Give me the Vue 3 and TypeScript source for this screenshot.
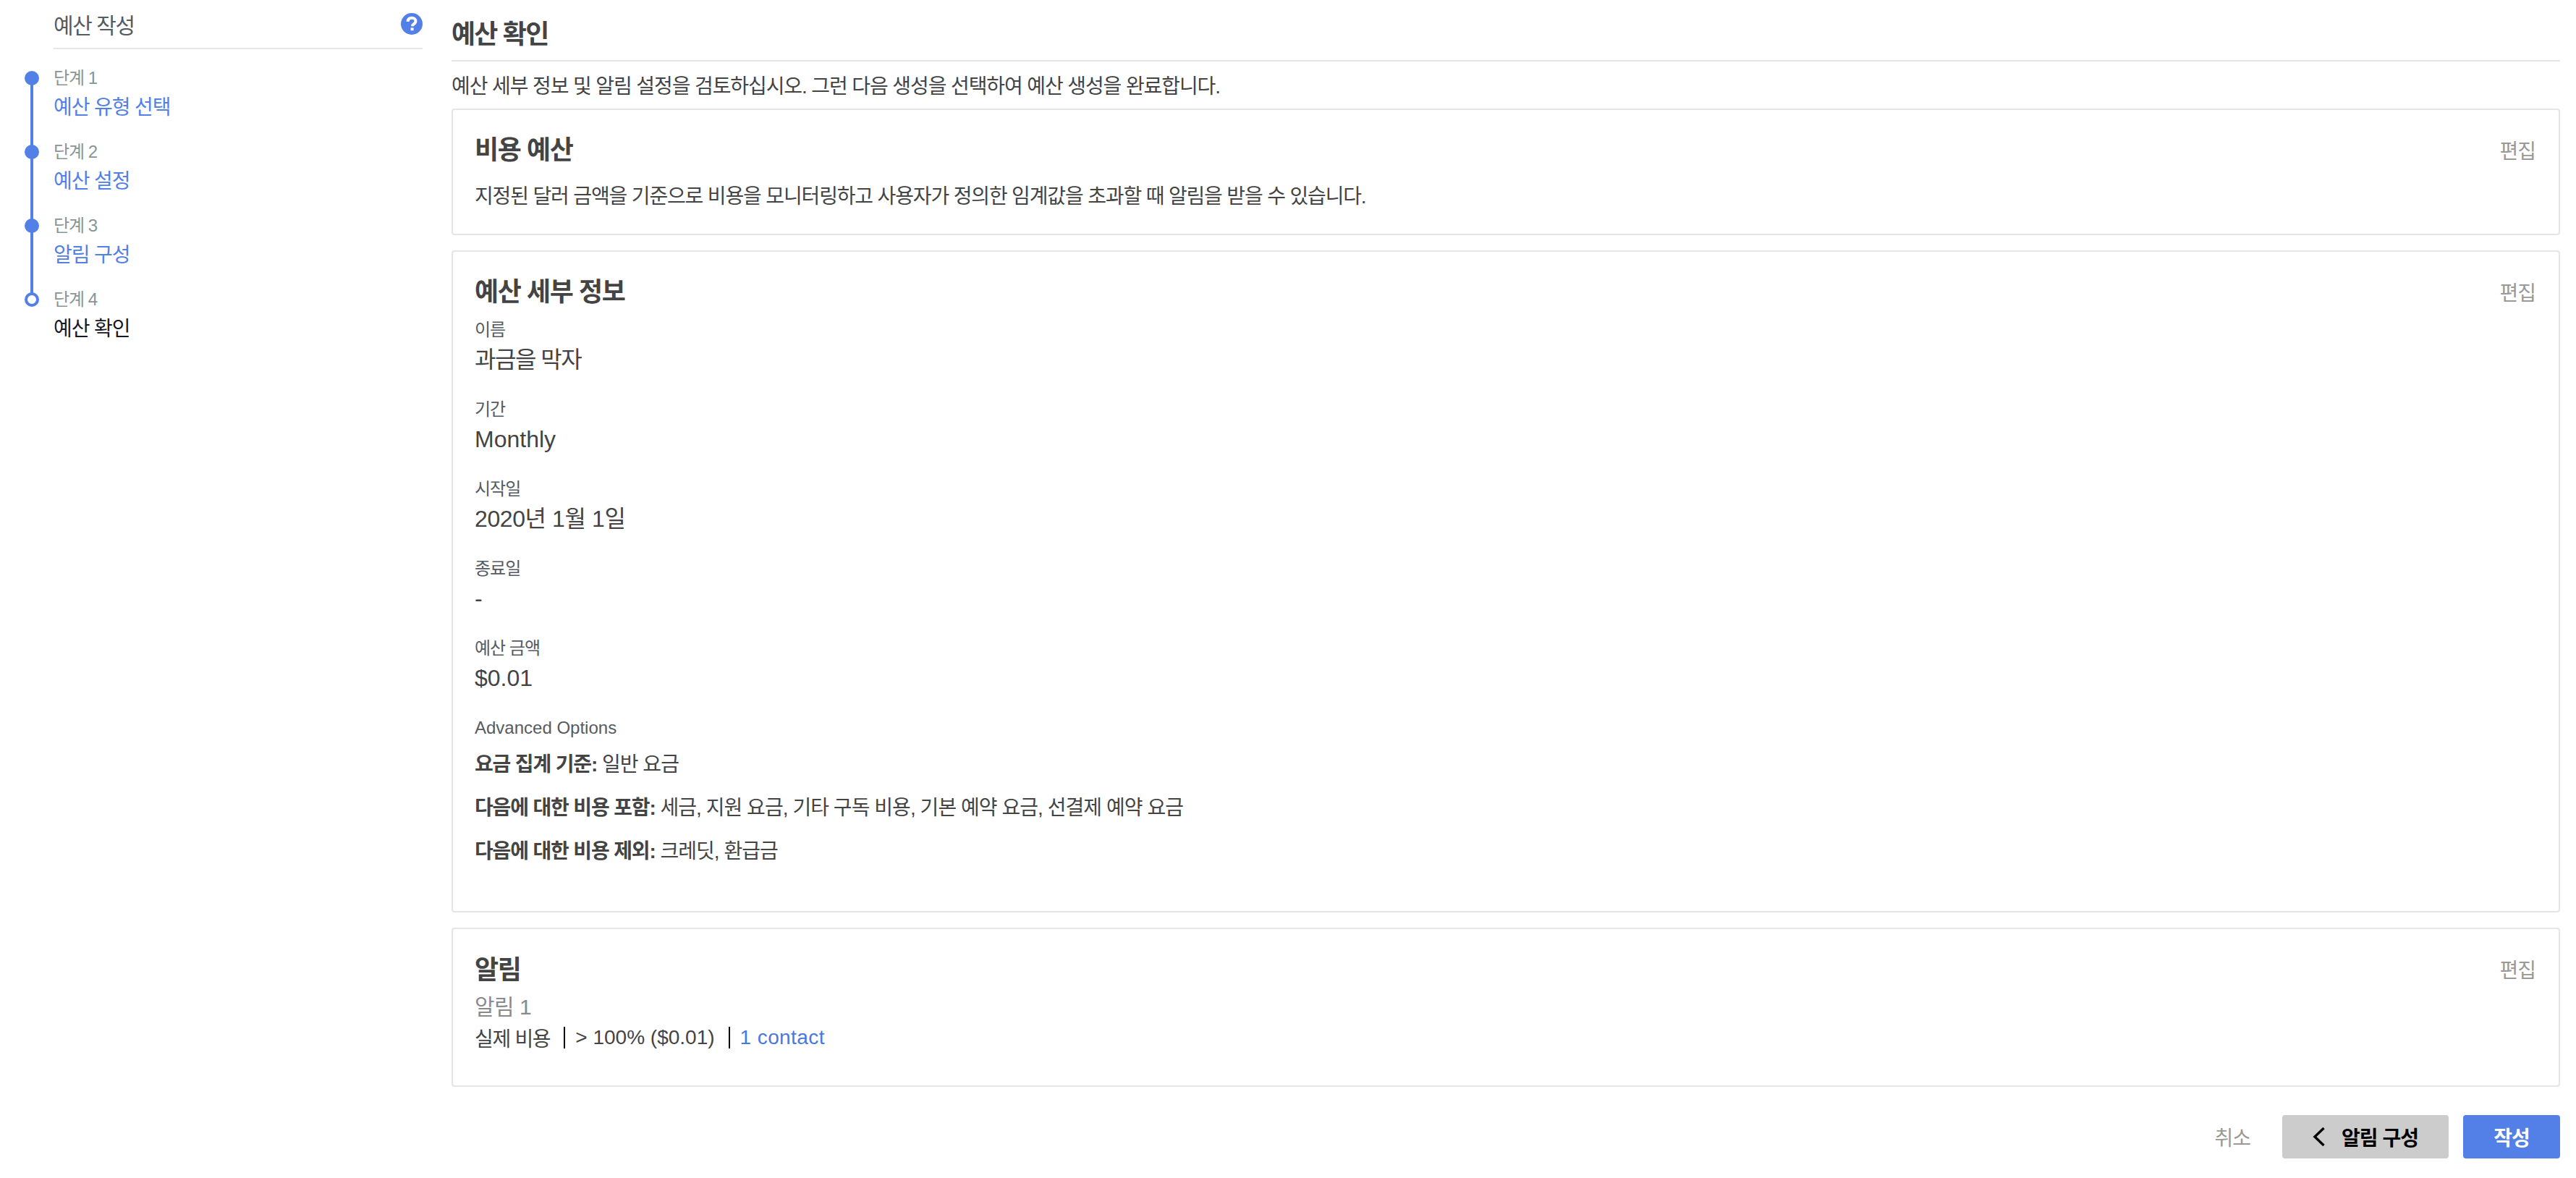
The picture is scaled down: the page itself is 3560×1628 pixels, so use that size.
<script setup lang="ts">
interface Step {
  label: string
  title: string
  done: boolean
}

interface Field {
  label: string
  value: string
  kind?: string
}

const steps: Step[] = [
  { label: '단계 1', title: '예산 유형 선택', done: true },
  { label: '단계 2', title: '예산 설정', done: true },
  { label: '단계 3', title: '알림 구성', done: true },
  { label: '단계 4', title: '예산 확인', done: false },
]

const fields: Field[] = [
  { label: '이름', value: '과금을 막자', kind: 'ko' },
  { label: '기간', value: 'Monthly' },
  { label: '시작일', value: '2020년 1월 1일', kind: 'mixed' },
  { label: '종료일', value: '-' },
  { label: '예산 금액', value: '$0.01' },
]

const options: Field[] = [
  { label: '요금 집계 기준:', value: '일반 요금' },
  { label: '다음에 대한 비용 포함:', value: '세금, 지원 요금, 기타 구독 비용, 기본 예약 요금, 선결제 예약 요금' },
  { label: '다음에 대한 비용 제외:', value: '크레딧, 환급금' },
]
</script>

<template>
  <div class="page">
    <aside class="sidebar">
      <div class="side-head">
        <span>예산 작성</span>
        <svg class="help" viewBox="0 0 30 30" width="30" height="30">
          <circle cx="15" cy="15" r="15" fill="#5280e6" />
          <path d="M9.6 11.8c.2-3.2 2.4-5 5.5-5 3.1 0 5.3 1.8 5.3 4.4 0 2-1.1 3-2.5 4-1.3.9-1.8 1.5-1.8 3" fill="none" stroke="#fff" stroke-width="4" />
          <rect x="13.6" y="20.4" width="4" height="3.8" fill="#fff" />
        </svg>
      </div>
      <ol class="steps">
        <li v-for="step in steps" :key="step.label" class="step">
          <span class="dot" :class="{ open: !step.done }"></span>
          <div class="step-label">{{ step.label }}</div>
          <div class="step-title" :class="{ current: !step.done }">{{ step.title }}</div>
        </li>
      </ol>
    </aside>

    <main class="main">
      <h1 class="heading">예산 확인</h1>
      <p class="intro">예산 세부 정보 및 알림 설정을 검토하십시오. 그런 다음 생성을 선택하여 예산 생성을 완료합니다.</p>

      <section class="card card-type">
        <a class="edit">편집</a>
        <h2>비용 예산</h2>
        <p class="type-desc">지정된 달러 금액을 기준으로 비용을 모니터링하고 사용자가 정의한 임계값을 초과할 때 알림을 받을 수 있습니다.</p>
      </section>

      <section class="card card-details">
        <a class="edit">편집</a>
        <h2>예산 세부 정보</h2>
        <div v-for="field in fields" :key="field.label" class="field">
          <div class="field-label">{{ field.label }}</div>
          <div class="field-value" :class="field.kind">{{ field.value }}</div>
        </div>
        <div class="field-label adv">Advanced Options</div>
        <p v-for="opt in options" :key="opt.label" class="option"><b>{{ opt.label }}</b> {{ opt.value }}</p>
      </section>

      <section class="card card-alert">
        <a class="edit">편집</a>
        <h2>알림</h2>
        <div class="alert-name">알림 1</div>
        <div class="alert-row">
          <span class="cost">실제 비용</span>
          <span class="sep">&gt; 100% ($0.01)</span>
          <a class="sep link">1 contact</a>
        </div>
      </section>

      <div class="actions">
        <a class="cancel">취소</a>
        <button class="btn btn-back" type="button">
          <svg viewBox="0 0 18 28" width="18" height="28">
            <path d="M15.5 2 3 14l12.5 12" fill="none" stroke="#000" stroke-width="3.4" />
          </svg>
          <span>알림 구성</span>
        </button>
        <button class="btn btn-submit" type="button">작성</button>
      </div>
    </main>
  </div>
</template>

<style scoped>
.page {
  display: flex;
  width: 3560px;
  height: 1628px;
  box-sizing: border-box;
  padding-left: 34px;
  font-family: "Liberation Sans", "Noto Sans CJK KR", sans-serif;
  font-size: 28px;
  color: #444;
  background: #fff;
}

.sidebar {
  width: 550px;
  margin-right: 40px;
  flex: none;
}

.side-head {
  display: flex;
  justify-content: space-between;
  align-items: center;
  height: 66px;
  margin-left: 40px;
  border-bottom: 2px solid #e5e5e5;
  font-size: 30px;
  letter-spacing: -1.4px;
  color: #545b64;
}

.steps {
  list-style: none;
  margin: 25px 0 0;
  padding: 0;
}

.step {
  position: relative;
  height: 102px;
  padding-left: 40px;
}

.step::before {
  content: "";
  position: absolute;
  left: 8px;
  top: 15px;
  width: 4px;
  height: 102px;
  background: #5280e6;
}

.step:last-child::before {
  display: none;
}

.dot {
  position: absolute;
  left: 0;
  top: 5px;
  width: 20px;
  height: 20px;
  box-sizing: border-box;
  border-radius: 50%;
  background: #5280e6;
}

.dot.open {
  background: #fff;
  border: 4px solid #5280e6;
}

.step-label {
  height: 30px;
  line-height: 30px;
  font-size: 24px;
  letter-spacing: -1px;
  color: #879596;
}

.step-title {
  height: 44px;
  line-height: 44px;
  margin-top: 4px;
  letter-spacing: -1.1px;
  color: #5280e6;
}

.step-title.current {
  color: #16191f;
}

.main {
  flex: 1;
  min-width: 0;
  padding-right: 22px;
}

.heading {
  height: 83px;
  margin: 0;
  line-height: 96px;
  font-size: 36px;
  font-weight: 700;
  letter-spacing: -1.8px;
  color: #444;
  border-bottom: 2px solid #e5e5e5;
}

.intro {
  height: 65px;
  margin: 0;
  line-height: 70px;
  letter-spacing: -1.1px;
}

.card {
  position: relative;
  box-sizing: border-box;
  margin-bottom: 21px;
  padding: 0 30px;
  border: 2px solid #e5e5e5;
  border-radius: 4px;
}

.card h2 {
  margin: 0;
  font-size: 36px;
  font-weight: 700;
  line-height: 44px;
  letter-spacing: -1.4px;
}

.edit {
  position: absolute;
  top: 38px;
  right: 32px;
  line-height: 40px;
  letter-spacing: -1px;
  color: #999;
}

.card-type {
  height: 175px;
  padding-top: 34px;
}

.type-desc {
  margin: 20px 0 0;
  line-height: 44px;
  letter-spacing: -1.15px;
}

.card-details {
  height: 915px;
  padding-top: 34px;
}

.card-details h2 {
  margin-bottom: 15px;
}

.field {
  height: 110px;
}

.field-label {
  height: 30px;
  line-height: 30px;
  font-size: 24px;
  letter-spacing: -1px;
  color: #545b64;
}

.field-value {
  height: 50px;
  margin-top: 1px;
  line-height: 50px;
  font-size: 32px;
}

.field-value.ko {
  letter-spacing: -1.5px;
}

.field-value.mixed {
  letter-spacing: -0.4px;
}

.adv {
  margin-bottom: 6px;
  letter-spacing: 0;
}

.option {
  height: 60px;
  margin: 0;
  line-height: 60px;
  letter-spacing: -0.95px;
}

.option b {
  letter-spacing: -1.15px;
}

.card-alert {
  height: 220px;
  padding-top: 35px;
}

.alert-name {
  height: 44px;
  margin-top: 7px;
  line-height: 44px;
  font-size: 30px;
  letter-spacing: -0.5px;
  color: #8a8a8a;
}

.alert-row {
  display: flex;
  align-items: center;
  height: 40px;
}

.cost {
  letter-spacing: -1.3px;
}

.sep {
  margin-left: 19px;
  padding-left: 14px;
  border-left: 2px solid #000;
  line-height: 30px;
}

.link {
  letter-spacing: 0.4px;
  color: #4878e0;
}

.actions {
  display: flex;
  justify-content: flex-end;
  align-items: center;
  gap: 20px;
  margin-top: 39px;
}

.cancel {
  margin-right: 24px;
  letter-spacing: -1px;
  color: #999;
}

.btn {
  display: flex;
  justify-content: center;
  align-items: center;
  height: 60px;
  padding: 0;
  border: 0;
  border-radius: 4px;
  font: inherit;
  font-weight: 700;
  letter-spacing: -1px;
}

.btn-back {
  gap: 22px;
  width: 230px;
  background: #ccc;
  color: #000;
}

.btn-submit {
  width: 134px;
  background: #5280e6;
  color: #fff;
}
</style>
